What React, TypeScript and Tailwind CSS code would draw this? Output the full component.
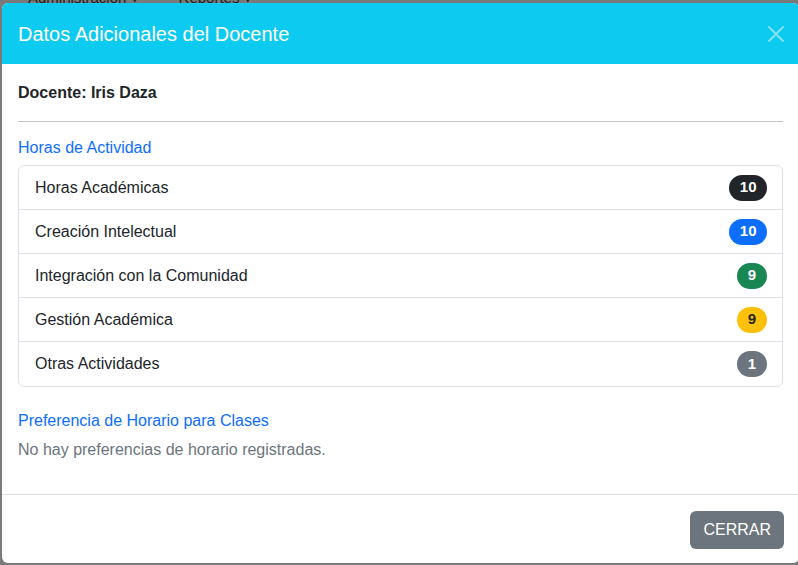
type Actividad = { label: string; horas: number; badge: string }

const actividades: Actividad[] = [
    { label: 'Horas Académicas', horas: 10, badge: 'bg-[#212529] text-white' },
    { label: 'Creación Intelectual', horas: 10, badge: 'bg-[#0d6efd] text-white' },
    { label: 'Integración con la Comunidad', horas: 9, badge: 'bg-[#198754] text-white' },
    { label: 'Gestión Académica', horas: 9, badge: 'bg-[#ffc107] text-[#212529]' },
    { label: 'Otras Actividades', horas: 1, badge: 'bg-[#6c757d] text-white' }
]

export default function App() {
    return (
        <div className="relative w-[798px] h-[565px] overflow-hidden bg-[#7a7a7a] font-['Liberation_Sans',Arial,sans-serif] text-[#212529]">
            {/* page behind the backdrop */}
            <div className="flex gap-10 pl-7 -mt-[13px] text-[15px] text-[#1f1f1f]">
                <span>Administración ▾</span>
                <span>Reportes ▾</span>
            </div>

            {/* Modal */}
            <div className="absolute left-[2px] top-[3px] w-[797px] bg-white rounded-[6px] overflow-hidden">
                <div className="h-[61px] bg-[#0dcaf0] flex items-center justify-between pl-4 pr-[15px]">
                    <h5 className="text-[20px] leading-[30px] text-white">Datos Adicionales del Docente</h5>
                    <button className="w-4 h-4 flex items-center justify-center opacity-50">
                        <svg viewBox="0 0 16 16" className="w-4 h-4" fill="none" stroke="white" strokeWidth="1.8" strokeLinecap="round">
                            <path d="M1 1 15 15M15 1 1 15" />
                        </svg>
                    </button>
                </div>

                <div className="pt-[17px] px-4 pb-4">
                    <p className="text-base leading-6 font-bold mb-4">Docente: Iris Daza</p>
                    <hr className="border-t border-[#c4c4c4] mb-4" />

                    <h6 className="text-base leading-[19.2px] text-[#0d6efd] mb-2">Horas de Actividad</h6>
                    <ul className="border border-[#dee2e6] rounded-[6px] divide-y divide-[#dee2e6] mb-6">
                        {actividades.map(a => (
                            <li key={a.label} className="h-[44px] flex items-center justify-between pl-4 pr-[15px] text-base">
                                <span>{a.label}</span>
                                <span className={`h-[26px] min-w-[30px] flex items-center justify-center px-[10.5px] rounded-full text-[15px] font-bold ${a.badge}`}>
                                    {a.horas}
                                </span>
                            </li>
                        ))}
                    </ul>

                    <h6 className="text-base leading-[19.2px] text-[#0d6efd] mb-2">Preferencia de Horario para Clases</h6>
                    <p className="text-base leading-6 text-[#6c757d] mb-4">No hay preferencias de horario registradas.</p>
                </div>

                <div className="border-t border-[#dee2e6] flex justify-end p-4 pr-[15px] pb-[14px]">
                    <button className="h-[38px] px-[13px] rounded-[6px] bg-[#6c757d] text-white text-base">CERRAR</button>
                </div>
            </div>
        </div>
    )
}
